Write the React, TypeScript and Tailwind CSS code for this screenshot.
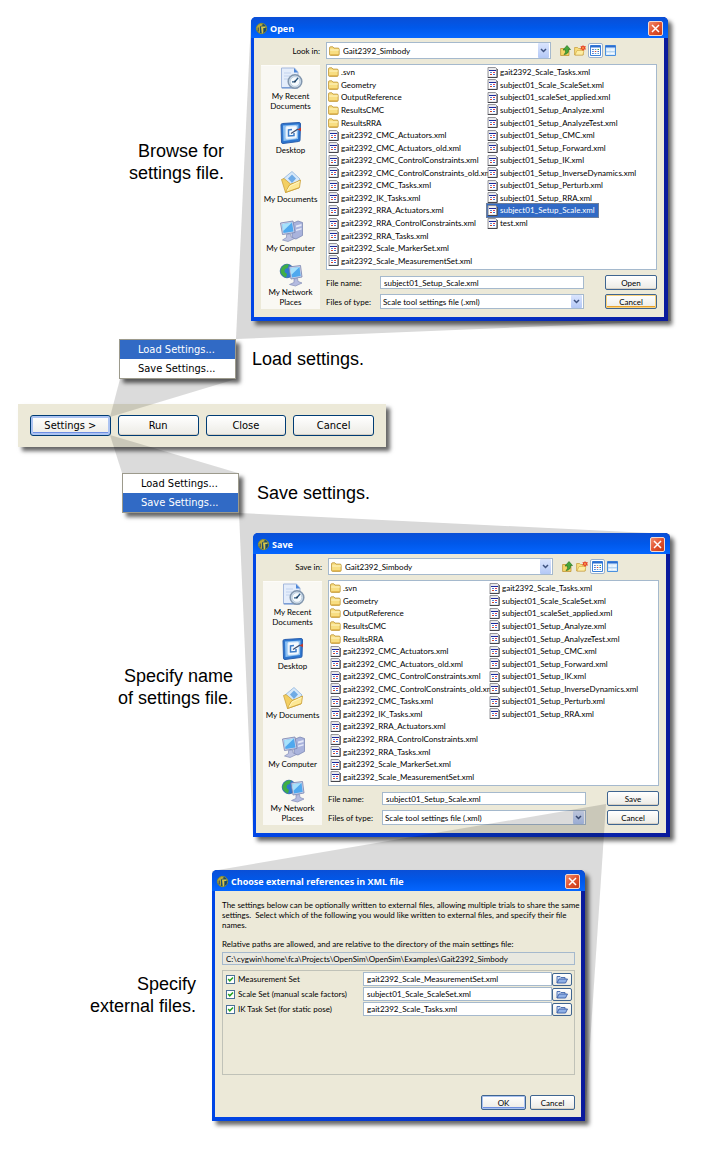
import React from "react";

const UI_FONT = "font-['Lato','DejaVu_Sans_Condensed',sans-serif]";
const MENU_FONT = "font-['DejaVu_Sans_Condensed','DejaVu_Sans',sans-serif]";

function AppIcon() {
  return (
    <svg className="size-[13px] shrink-0" viewBox="0 0 13 13" aria-hidden="true">
      <circle cx="6.5" cy="6.5" r="5.2" fill="#1d4e6a" stroke="#7f8c3a" strokeWidth="1" />
      <path d="M1.500 6Q2.500 2 6.500 1.500L8 3 5 4.500V11Q2 10 1.500 6z" fill="#b9a93a" />
      <path d="M6 4.500h5.500L10 6H8.300v4.500L6.800 12z" fill="#d8c548" />
      <path d="M3.200 5.500v4M9.800 7.500v2.500" stroke="#27405a" strokeWidth="1" />
    </svg>
  );
}

function Folder() {
  return (
    <svg className="h-[10px] w-[11px] shrink-0" viewBox="0 0 12 10" preserveAspectRatio="none" aria-hidden="true">
      <path d="M.6 2Q.6.8 1.7.8h2.500l1.200 1.300h4.400q1.300 0 1.300 1.100v5q0 1.200-1.200 1.200H1.700Q.6 9.400.6 8.200z" fill="#f8de82" stroke="#b98f2c" strokeWidth=".8" />
      <path d="M1.200 4h9.600" stroke="#fff6c8" strokeWidth="1" />
      <path d="M1.400 8.600h9.200" stroke="#d9a63a" strokeWidth=".7" />
    </svg>
  );
}

function XmlFile() {
  return (
    <svg className="size-[11px] shrink-0" viewBox="0 0 11 11" aria-hidden="true">
      <path d="M1 .5h7.500L10 2v8.500H1z" fill="#e9e9ec" stroke="#8a8a90" strokeWidth=".9" />
      <path d="M10.200 2v8.500H.8" fill="none" stroke="#45454c" strokeWidth="1" />
      <path d="M2 3h7v6H2z" fill="#fff" />
      <path d="M2 3h7v1H2z" fill="#1c2a9c" />
      <path d="M3 5h2v1H3z" fill="#5a86d0" />
      <path d="M6 5h2v1H6z" fill="#d8405a" />
      <path d="M3 7h2v1H3z" fill="#d0452e" />
      <path d="M6 7h2v1H6z" fill="#3c70d8" />
    </svg>
  );
}

function RecentIcon() {
  return (
    <svg className="size-[24px] shrink-0" viewBox="0 0 24 24" aria-hidden="true">
      <path d="M2.500 1h13l3.500 4v16h-16.500z" fill="#e4edfb" stroke="#a4b8dc" />
      <path d="M15 1v4.500h4z" fill="#4c86d8" />
      <path d="M3 20.800h15" stroke="#5b86cc" />
      <path d="M5 6h7M5 9h6M5 12h4" stroke="#c2d3ee" />
      <circle cx="16" cy="14.500" r="6.800" fill="#cfdfee" stroke="#8296ad" strokeWidth="1.500" />
      <circle cx="16" cy="14.500" r="4.800" fill="#f6fafd" stroke="#a9bccf" strokeWidth=".6" />
      <path d="M16 14.500 19 11M13 14.800h3" stroke="#27567f" strokeWidth="1.300" />
      <circle cx="16" cy="14.500" r="1" fill="#27415f" />
    </svg>
  );
}

function DesktopIcon() {
  return (
    <svg className="size-[24px] shrink-0" viewBox="0 0 24 24" aria-hidden="true">
      <path d="M2 4Q2 2.500 3.500 2.500L20 1.500q1.500 0 1.500 1.500L21 19q0 1.500-1.500 1.500L4 22.500q-1.500 0-1.500-1.500z" fill="#2d76cf" stroke="#2a5fae" />
      <path d="m4 4.500 15.500-1L19 18 4.500 20z" fill="#8cc0f2" />
      <path d="M7 6.500Q7 5.500 8 5.500L16.500 5q1 0 1 1v10q0 1-1 1L8 18q-1 0-1-1z" fill="#f6fafe" stroke="#dcebfa" />
      <path d="M13 8.500 9.500 9v6l5.500-.5V12" fill="none" stroke="#3c7cc8" strokeWidth="1.500" />
      <path d="m12 12.500 7-4.500" stroke="#3a4d70" strokeWidth="1.400" />
      <path d="m18.500 8.500 3.500-2v3.800z" fill="#c43a2c" />
    </svg>
  );
}

function DocumentsIcon() {
  return (
    <svg className="size-[24px] shrink-0" viewBox="0 0 24 24" aria-hidden="true">
      <path d="m4 9 9-7.500L21 9l-8 9z" fill="#d7e9fa" stroke="#8fb4dc" strokeWidth=".8" />
      <path d="m9 8.500 4-4L17 8.500l-4 4.500z" fill="#6fabe6" />
      <path d="M2.500 9.500 5 8.500l2.500 2 4 3.500 7-1.500L20 18 6.500 22.500z" fill="#f3cf62" stroke="#c49a34" strokeWidth=".7" />
      <path d="m6.500 22.500 4-7.500L21.500 10l-1 7.500z" fill="#fde894" stroke="#c99c2f" strokeWidth=".8" />
      <path d="m8 20.800 3.200-5 9.300-4.200" fill="none" stroke="#fff6cb" strokeWidth=".9" />
    </svg>
  );
}

function ComputerIcon() {
  return (
    <svg className="size-[24px] shrink-0" viewBox="0 0 24 24" aria-hidden="true">
      <path d="m13 4.500 6-2.500 4.500 1.500v13L17 20l-4-1z" fill="#a9b3dc" stroke="#727fae" strokeWidth=".7" />
      <path d="m17 6.500 5.500-1.500v2L17 8.500zM17 10.500 22.500 9v1.600L17 12z" fill="#e4e8f7" />
      <path d="m1.500 4 12.500-2L16 13.500 3.500 15.500z" fill="#cdd3ea" stroke="#7682ae" strokeWidth=".8" />
      <path d="m3 5.200 10-1.600 1.500 8.800-10 1.600z" fill="#4fa8ee" />
      <path d="m3 5.200 10-1.600L4.200 12z" fill="#a8e2fb" />
      <path d="m7.500 15.500 4-.6.500 3 3.500 1.600-6.500 3-5.500-1.500 4-2.500z" fill="#bcc2e2" stroke="#848eb8" strokeWidth=".7" />
    </svg>
  );
}

function NetworkIcon() {
  return (
    <svg className="size-[24px] shrink-0" viewBox="0 0 24 24" aria-hidden="true">
      <circle cx="8" cy="8" r="6.800" fill="#2f79cf" stroke="#1f5a9c" strokeWidth=".7" />
      <path d="M3 4q3-3.500 7-2.500L8.500 5 6 6 5.500 9l2.500 2-1 3.500Q1.500 12 1.500 7.500z" fill="#3fae45" />
      <path d="m10 4 11.500-1.500L23 14l-11 2z" fill="#cdd3ea" stroke="#7682ae" strokeWidth=".8" />
      <path d="m11.400 5.200 9.100-1.200 1.200 9-8.700 1.500z" fill="#4fa8ee" />
      <path d="m11.400 5.200 9.100-1.200-8.300 8z" fill="#a6e0fb" />
      <path d="m15 16 3.500-.6.500 3 4 1.600-6.500 3-6-1.500 4.500-2z" fill="#b4bbe0" stroke="#848eb8" strokeWidth=".7" />
    </svg>
  );
}

function CloseButton() {
  return (
    <button
      aria-label="Close window"
      className="flex size-[15px] items-center justify-center rounded-[2px] border border-[#f3d9d0] bg-linear-to-br from-[#f08a6a] via-[#e2532f] to-[#c63a14]"
    >
      <svg className="size-[9px]" viewBox="0 0 9 9" aria-hidden="true">
        <path d="m1 1 7 7M8 1 1 8" stroke="#fff" strokeWidth="1.500" />
      </svg>
    </button>
  );
}

function Arrow() {
  return (
    <span className="pointer-events-none flex w-[11px] shrink-0 items-center justify-center self-stretch rounded-[1px] bg-linear-to-b from-[#dbe5fd] to-[#b3c8f6]">
      <svg className="h-[5px] w-[7px]" viewBox="0 0 7 5" aria-hidden="true">
        <path d="m1 1 2.500 2.500L6 1" fill="none" stroke="#3f5380" strokeWidth="1.500" />
      </svg>
    </span>
  );
}

function Window({ title, children }: { title: string; children: React.ReactNode }) {
  return (
    <section
      aria-label={title}
      className="flex min-w-0 flex-1 flex-col rounded-t-[5px] bg-linear-to-r from-[#0046e6] via-[#0537cf] to-[#0a1a9c] shadow-[4px_4px_4px_rgba(0,0,0,0.6)]"
    >
      <header className="flex h-[21px] items-center gap-[2px] rounded-t-[5px] bg-linear-to-b from-[#0a4fd6] via-[#0058ea] to-[#0566ff] pt-[2px] pr-[5px] pl-[4px]">
        <AppIcon />
        <h2 className="flex-1 font-['Open_Sans','Noto_Sans',sans-serif] text-[9px] leading-[12px] font-bold text-white">{title}</h2>
        <CloseButton />
      </header>
      <div className="mr-[4px] mb-[4px] ml-[3px] flex flex-1 flex-col bg-[#ece9d8]">{children}</div>
    </section>
  );
}

function DialogButton({ children, tone = "plain" }: { children: React.ReactNode; tone?: "plain" | "hot" | "default" }) {
  const tones = {
    plain: "shadow-[inset_0_-1px_0_#d6d0c5]",
    hot: "shadow-[inset_0_0_0_1px_#fad27c,inset_0_-2px_0_#e9a22c]",
    default: "shadow-[inset_0_0_0_1px_#a9c1f0,inset_0_-2px_0_#6f8fe0]",
  };
  return (
    <button
      className={`h-[15px] rounded-[2px] border border-[#3f6590] bg-linear-to-b from-white to-[#ecebe5] text-[8px] leading-[12px] text-black ${tones[tone]}`}
    >
      {children}
    </button>
  );
}

const places = [
  { icon: <RecentIcon />, lines: ["My Recent", "Documents"], box: "h-[54px]" },
  { icon: <DesktopIcon />, lines: ["Desktop"], box: "h-[49px]" },
  { icon: <DocumentsIcon />, lines: ["My Documents"], box: "h-[49px]" },
  { icon: <ComputerIcon />, lines: ["My Computer"], box: "h-[44px]" },
  { icon: <NetworkIcon />, lines: ["My Network", "Places"], box: "h-[44px]" },
];

const folders = [".svn", "Geometry", "OutputReference", "ResultsCMC", "ResultsRRA"];
const sharedFiles = [
  "gait2392_CMC_Actuators.xml",
  "gait2392_CMC_Actuators_old.xml",
  "gait2392_CMC_ControlConstraints.xml",
  "gait2392_CMC_ControlConstraints_old.xml",
  "gait2392_CMC_Tasks.xml",
  "gait2392_IK_Tasks.xml",
  "gait2392_RRA_Actuators.xml",
  "gait2392_RRA_ControlConstraints.xml",
  "gait2392_RRA_Tasks.xml",
  "gait2392_Scale_MarkerSet.xml",
  "gait2392_Scale_MeasurementSet.xml",
  "gait2392_Scale_Tasks.xml",
  "subject01_Scale_ScaleSet.xml",
  "subject01_scaleSet_applied.xml",
  "subject01_Setup_Analyze.xml",
  "subject01_Setup_AnalyzeTest.xml",
  "subject01_Setup_CMC.xml",
  "subject01_Setup_Forward.xml",
  "subject01_Setup_IK.xml",
  "subject01_Setup_InverseDynamics.xml",
  "subject01_Setup_Perturb.xml",
  "subject01_Setup_RRA.xml",
];

function ToolIcons() {
  return (
    <div className="flex items-center gap-[2px]">
      <button aria-label="Up one level">
        <svg className="size-[11px]" viewBox="0 0 11 11" aria-hidden="true">
          <path d="M.6 3.500h3.500l1 1H9v6H.6z" fill="#f4d568" stroke="#b88d28" strokeWidth=".7" />
          <path d="M4 9.500Q6 8.500 5.500 5H3L7 .5l3.500 4H8.500Q9 9 4 9.500z" fill="#45a63a" stroke="#1f6d1c" strokeWidth=".6" />
        </svg>
      </button>
      <button aria-label="Create new folder" className="pl-px">
        <svg className="h-[11px] w-[12px]" viewBox="0 0 12 11" aria-hidden="true">
          <path d="M.6 2.500h3l1 1h4.600v6.500H.6z" fill="#f8dd7c" stroke="#c49a34" strokeWidth=".7" />
          <path d="M1 10 3 5.500h7L8.800 10z" fill="#fdeda2" stroke="#c49a34" strokeWidth=".5" />
          <path d="m9 0 .9 1.300 1.900-.3-.6 1.700.8 1.700-1.800.1L9 6l-1-1.500-1.800-.1.900-1.600L6.500 1l1.700.2z" fill="#e8452a" />
          <circle cx="9" cy="2.900" r=".9" fill="#f7b24a" />
        </svg>
      </button>
      <button aria-label="List" className="rounded-[2px] border border-[#9bb1cc] bg-white p-px">
        <svg className="size-[11px]" viewBox="0 0 11 11" aria-hidden="true">
          <path d="M.5.5h10v10H.5z" fill="#fff" stroke="#3c82da" />
          <path d="M.5 1.500h10" stroke="#2b6dd0" strokeWidth="2" />
          <path d="M2.200 4.500h1.500M2.200 6.500h1.500M2.200 8.500h1.500M7.500 6.500H9" stroke="#3a66c8" />
          <path d="M4.800 4.500h1.500M7.500 8.500H9M4.800 8.500h1.500" stroke="#5d9ad8" />
          <path d="M7.500 4.500H9" stroke="#49a445" />
          <path d="M4.800 6.500h1.500" stroke="#d0533c" />
        </svg>
      </button>
      <button aria-label="Details">
        <svg className="size-[11px]" viewBox="0 0 11 11" aria-hidden="true">
          <path d="M.5.5h10v10H.5z" fill="#d9ebfc" stroke="#4a90de" />
          <path d="M.5 1.500h10" stroke="#2b6dd0" strokeWidth="2" />
          <path d="M2 5h2.500M5.500 5H9M2 8.300h2.500M5.500 8.300H9" stroke="#fff" />
          <path d="M1 6.700h9" stroke="#8fbce8" strokeWidth=".6" />
        </svg>
      </button>
    </div>
  );
}

function FileDialog({ action, look, files, selected }: { action: string; look: string; files: string[]; selected?: string }) {
  const id = action.toLowerCase();
  return (
    <Window title={action}>
      <div className="flex h-[24px] items-center pt-px">
        <label htmlFor={`${id}-dir`} className="w-[72px] pr-[6px] text-right">{look}</label>
        <div className="mr-[9px] flex h-[17px] w-[225px] items-center gap-[3px] border border-[#a5b9cd] bg-white pr-px pl-[2px]">
          <Folder />
          <select id={`${id}-dir`} className="min-w-0 flex-1 appearance-none bg-transparent">
            <option>Gait2392_Simbody</option>
          </select>
          <Arrow />
        </div>
        <ToolIcons />
      </div>
      <div className="flex flex-1 gap-[6px] pt-[2px] pr-[7px] pb-[8px] pl-[7px]">
        <nav aria-label={`${action} places`} className="mt-px flex w-[59px] shrink-0 flex-col border-t border-[#fdfcf9] bg-[#f9f8f3] pt-px">
          {places.map((p) => (
            <button key={p.lines[0]} className={`flex flex-col items-center justify-start leading-[10px] ${p.box}`}>
              {p.icon}
              {p.lines.map((l) => (
                <span key={l} className="whitespace-nowrap">{l}</span>
              ))}
            </button>
          ))}
        </nav>
        <div className="flex min-w-0 flex-1 flex-col">
          <div className="h-[206px] border border-[#a5b9cd] bg-white pt-px pl-px">
            <ul
              role="listbox"
              aria-label={`${action} files`}
              className="grid h-[201px] grid-flow-col grid-cols-[159px_1fr] grid-rows-[repeat(16,minmax(0,1fr))]"
            >
              {[...folders, ...files].map((name) => (
                <li
                  key={name}
                  role="option"
                  aria-selected={name === selected}
                  className={
                    name === selected
                      ? "flex items-center gap-[2px] justify-self-start bg-[#316ac5] pr-[3px] whitespace-nowrap text-white outline-1 outline-[#6d7f9c]"
                      : "flex items-center gap-[2px] justify-self-start whitespace-nowrap"
                  }
                >
                  {folders.includes(name) ? <Folder /> : <XmlFile />}
                  {name}
                </li>
              ))}
            </ul>
          </div>
          <div className="mt-[5px] grid grid-cols-[54px_204px_1fr] items-center gap-y-[4px]">
            <label htmlFor={`${id}-name`}>File name:</label>
            <input id={`${id}-name`} defaultValue="subject01_Setup_Scale.xml" className="h-[13px] border border-[#a5b9cd] bg-white px-[3px]" />
            <div className="ml-[21px] grid">
              <DialogButton>{action}</DialogButton>
            </div>
            <label htmlFor={`${id}-type`}>Files of type:</label>
            <div className="flex h-[15px] items-center border border-[#a5b9cd] bg-white pr-px pl-[2px]">
              <select id={`${id}-type`} className="min-w-0 flex-1 appearance-none bg-transparent">
                <option>Scale tool settings file (.xml)</option>
              </select>
              <Arrow />
            </div>
            <div className="ml-[21px] grid">
              <DialogButton tone={selected ? "hot" : "plain"}>Cancel</DialogButton>
            </div>
          </div>
        </div>
      </div>
    </Window>
  );
}

function SettingsMenu({ active }: { active: string }) {
  return (
    <div role="menu" className={`flex w-[117px] shrink-0 flex-col border border-[#9c9a8c] bg-white text-[11px] shadow-[4px_4px_4px_rgba(0,0,0,0.6)] ${MENU_FONT}`}>
      {["Load Settings...", "Save Settings..."].map((item) => (
        <button
          key={item}
          role="menuitem"
          className={`h-[19px] pl-[18px] text-left leading-[19px] ${item === active ? "bg-[#316ac5] text-white" : "text-black"}`}
        >
          {item}
        </button>
      ))}
    </div>
  );
}

const references = [
  { label: "Measurement Set", file: "gait2392_Scale_MeasurementSet.xml" },
  { label: "Scale Set (manual scale factors)", file: "subject01_Scale_ScaleSet.xml" },
  { label: "IK Task Set (for static pose)", file: "gait2392_Scale_Tasks.xml" },
];

function ReferencesDialog() {
  return (
    <Window title="Choose external references in XML file">
      <div className="flex flex-col pt-[9px] pr-[6px] pb-[7px] pl-[7px]">
        <p className="leading-[10px] whitespace-nowrap">
          The settings below can be optionally written to external files, allowing multiple trials to share the same
          <br />
          settings.&nbsp; Select which of the following you would like written to external files, and specify their file
          <br />
          names.
        </p>
        <label htmlFor="base" className="mt-[9px] leading-[10px]">
          Relative paths are allowed, and are relative to the directory of the main settings file:
        </label>
        <input
          id="base"
          readOnly
          value="C:\cygwin\home\fca\Projects\OpenSim\OpenSim\Examples\Gait2392_Simbody"
          className="mt-[3px] h-[13px] border border-[#a5b9cd] bg-[#e8e8e0] px-[3px]"
        />
        <div className="mt-[5px] flex h-[105px] flex-col gap-px border border-[#c0c2b8] pt-px pr-[2px] pl-[3px]">
          {references.map((r, i) => (
            <div key={r.label} className="flex h-[14px] items-center">
              <label className="flex w-[137px] shrink-0 items-center gap-[3px] whitespace-nowrap">
                <span className="grid size-[9px]">
                  <input type="checkbox" defaultChecked className="col-start-1 row-start-1 size-[9px] appearance-none border border-[#4b7199] bg-white" />
                  <svg className="pointer-events-none col-start-1 row-start-1 size-[9px]" viewBox="0 0 9 9" aria-hidden="true">
                    <path d="m2.200 4 1.600 1.800L7 2.500" fill="none" stroke="#21a121" strokeWidth="1.500" />
                  </svg>
                </span>
                {r.label}
              </label>
              <input aria-label={`${r.label} file`} defaultValue={r.file} className="h-[14px] min-w-0 flex-1 border border-[#a5b9cd] bg-white px-[3px]" />
              <button
                aria-label={`Browse ${i + 1}`}
                className="flex h-[13px] w-[20px] shrink-0 items-center justify-center rounded-[2px] border border-[#3f6590] bg-linear-to-b from-white to-[#ecebe5]"
              >
                <svg className="h-[9px] w-[12px]" viewBox="0 0 12 9" aria-hidden="true">
                  <path d="M1 8V1.500h3l1 1h4V4" fill="#c5d7f3" stroke="#4267ad" strokeWidth=".9" />
                  <path d="M1 8 3 4h8.500L9.500 8z" fill="#8fb0e6" stroke="#3a5ea6" strokeWidth=".9" />
                </svg>
              </button>
            </div>
          ))}
        </div>
        <div className="mt-[20px] grid grid-cols-[45px_45px] justify-end gap-[4px]">
          <DialogButton tone="default">OK</DialogButton>
          <DialogButton>Cancel</DialogButton>
        </div>
      </div>
    </Window>
  );
}

const caption = "font-['Liberation_Sans',sans-serif] text-[18px] leading-[22px]";

export default function App() {
  return (
    <main className={`relative w-full max-w-[720px] overflow-hidden bg-white pt-[17px] pb-[31px] text-[8px] leading-[12px] text-black ${UI_FONT}`}>
      <svg className="pointer-events-none absolute top-0 left-0 h-[1152px] w-[720px]" viewBox="0 0 720 1152" aria-hidden="true">
        <path d="M236 339 251 20H668L671 321z" fill="#d9d9d9" />
        <path d="M239 513 253 835H670V534z" fill="#d9d9d9" />
      </svg>
      <svg className="pointer-events-none absolute top-0 left-0 z-10 h-[1152px] w-[720px]" viewBox="0 0 720 1152" aria-hidden="true">
        <path d="M110 417 120 379H236z" fill="#000" fillOpacity=".14" />
        <path d="M110 435 122 473H238z" fill="#000" fillOpacity=".14" />
        <path d="M606 804 212 871V1120H585z" fill="#000" fillOpacity=".14" />
      </svg>

      <div className="relative flex gap-[27px] pr-[52px]">
        <p className={`w-[224px] shrink-0 pt-[123px] text-right ${caption}`}>
          Browse for
          <br />
          settings file.
        </p>
        <FileDialog action="Open" look="Look in:" files={[...sharedFiles, "subject01_Setup_Scale.xml", "test.xml"]} selected="subject01_Setup_Scale.xml" />
      </div>

      <div className="relative z-20 mt-[18px] flex items-center gap-[16px] pl-[119px]">
        <SettingsMenu active="Load Settings..." />
        <p className={caption}>Load settings.</p>
      </div>

      <div
        role="toolbar"
        aria-label="Tool actions"
        className={`relative mt-[25px] ml-[18px] grid w-[368px] grid-cols-4 gap-[7px] bg-[#ece9d8] px-[12px] py-[11px] shadow-[4px_4px_4px_rgba(0,0,0,0.6)] ${MENU_FONT}`}
      >
        {["Settings >", "Run", "Close", "Cancel"].map((b, i) => (
          <button
            key={b}
            className={`h-[21px] rounded-[3px] border border-[#003c74] bg-linear-to-b from-white to-[#ecebe5] text-[11px] leading-[18px] ${
              i === 0 ? "shadow-[inset_0_0_0_2px_#adc4f2,inset_0_-3px_0_#6f8fe4]" : "shadow-[inset_0_-1px_0_#d6d0c5]"
            }`}
          >
            {b}
          </button>
        ))}
      </div>

      <div className="relative z-20 mt-[26px] flex items-center gap-[18px] pl-[122px]">
        <SettingsMenu active="Save Settings..." />
        <p className={caption}>Save settings.</p>
      </div>

      <div className="relative mt-[20px] flex gap-[20px] pr-[50px]">
        <p className={`w-[233px] shrink-0 pt-[132px] text-right ${caption}`}>
          Specify name
          <br />
          of settings file.
        </p>
        <FileDialog action="Save" look="Save in:" files={sharedFiles} />
      </div>

      <div className="relative z-20 mt-[33px] flex gap-[16px] pr-[135px]">
        <p className={`w-[196px] shrink-0 pt-[103px] text-right ${caption}`}>
          Specify
          <br />
          external files.
        </p>
        <ReferencesDialog />
      </div>
    </main>
  );
}
